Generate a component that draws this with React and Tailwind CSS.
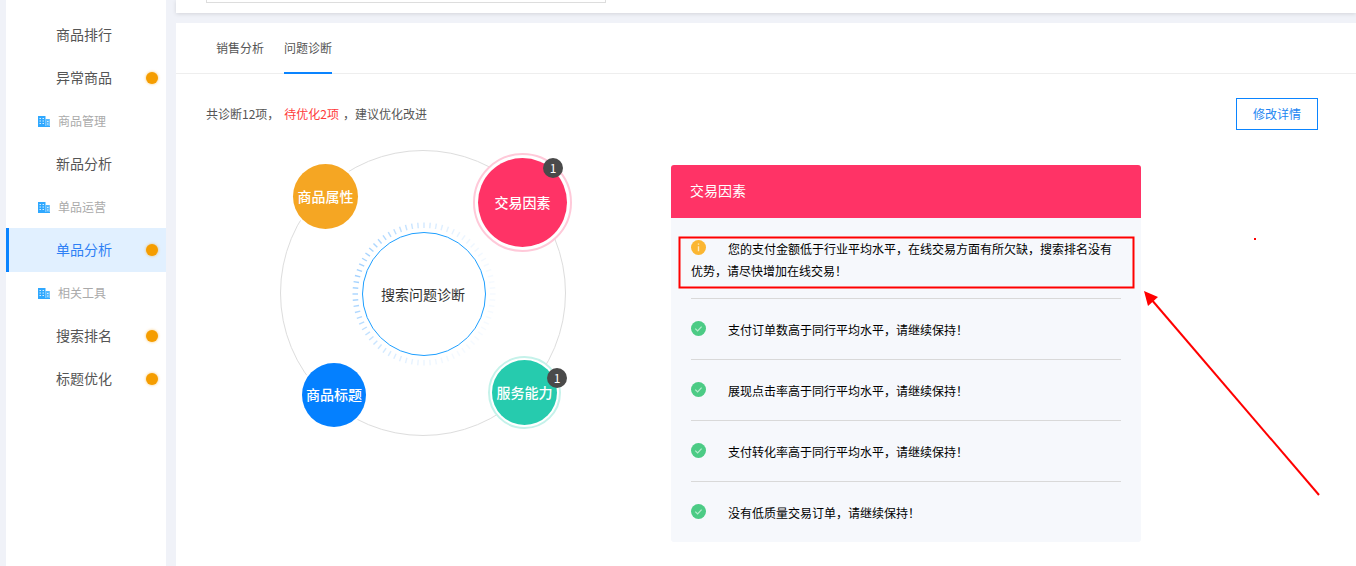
import React from 'react';

const menu = [
    { label: '商品排行' },
    { label: '异常商品', dot: true },
    { label: '商品管理', group: true },
    { label: '新品分析' },
    { label: '单品运营', group: true },
    { label: '单品分析', dot: true, active: true },
    { label: '相关工具', group: true, tall: 'h-[42px]' },
    { label: '搜索排名', dot: true },
    { label: '标题优化', dot: true },
];

const results = [
    { warn: true, text: '您的支付金额低于行业平均水平，在线交易方面有所欠缺，搜索排名没有优势，请尽快增加在线交易！' },
    { text: '支付订单数高于同行平均水平，请继续保持！' },
    { text: '展现点击率高于同行平均水平，请继续保持！' },
    { text: '支付转化率高于同行平均水平，请继续保持！' },
    { text: '没有低质量交易订单，请继续保持！' },
];

const BuildingIcon = () => (
    <svg width="12" height="12" viewBox="0 0 12 12" className="shrink-0">
        <path d="M0 12 V1 H7.500 V12 Z" fill="#2fa8ff" />
        <path d="M7.500 4 H11.800 V12 H7.500 Z" fill="#55b9ff" />
        <path d="M1.500 3.500h1.500M4.500 3.500h1.500M1.500 6h1.500M4.500 6h1.500M1.500 8.500h1.500M4.500 8.500h1.500M9 6.500h1.500M9 9h1.500" stroke="#d6eeff" strokeWidth="1" />
        <path d="M0 11.500H12" stroke="#2fa8ff" strokeWidth="1" />
    </svg>
);

const StatusIcon = ({ warn }) => (
    <svg width="15" height="15" viewBox="0 0 15 15" className="inline-block align-top mt-[2px] mr-[22px]">
        <circle cx="7.500" cy="7.500" r="7.500" fill={warn ? '#fbb632' : '#4ccb85'} />
        {warn ? (
            <path d="M7.500 3.500v1.200M7.500 6.200v5" stroke="#ffe9bd" strokeWidth="1.400" fill="none" />
        ) : (
            <path d="M4.300 7.600l2.300 2.300 4-4.200" stroke="#b5edcd" strokeWidth="1.200" fill="none" />
        )}
    </svg>
);

const SideMenu = () => (
    <aside className="w-[160px] ml-[6px] mr-[10px] bg-white pt-[13px] shrink-0">
        {menu.map(x => x.group ? (
            <div key={x.label} className={`${x.tall || 'h-[43px]'} flex items-center pl-[32px] gap-[8px] text-xs text-[#aaaaaa]`}>
                <BuildingIcon />
                {x.label}
            </div>
        ) : (
            <div
                key={x.label}
                className={`relative flex items-center pb-[2px] text-sm ${x.active ? 'h-[44px] pl-[47px] bg-[#e1f0ff] text-[#2f80f5] border-l-[3px] border-[#0a84ff]' : 'h-[43px] pl-[50px] text-[#555555]'}`}
            >
                {x.label}
                {x.dot && <span className={`absolute top-[16px] w-3 h-3 rounded-full bg-[#f59d00] shadow-[0_0_3px_rgba(245,157,0,0.6)] ${x.active ? 'left-[137px]' : 'left-[140px]'}`} />}
            </div>
        ))}
    </aside>
);

const Ticks = () => {
    const ticks = [];
    for (let i = 0; i < 72; i++) {
        const a = (i * 5 * Math.PI) / 180;
        const strength = (1 + Math.cos(a - Math.PI * 1.1)) / 2;
        ticks.push(
            <line
                key={i}
                x1={151 + 66 * Math.cos(a)}
                y1={144 + 66 * Math.sin(a)}
                x2={151 + 71.500 * Math.cos(a)}
                y2={144 + 71.500 * Math.sin(a)}
                stroke="#8ec8ff"
                strokeWidth="1.400"
                opacity={0.08 + 0.72 * strength * strength}
            />
        );
    }
    return ticks;
};

const Badge = ({ className }) => (
    <span className={`absolute w-5 h-5 rounded-full bg-[#4a4a4a] text-white text-xs flex items-center justify-center ${className}`}>1</span>
);

const Diagram = () => (
    <div className="relative w-[300px] h-[290px] ml-[67px] shrink-0">
        <svg width="300" height="290" className="absolute left-0 top-0">
            <circle cx="150" cy="143" r="142.500" fill="none" stroke="#dddddd" />
            <Ticks />
            <circle cx="151" cy="144" r="61.500" fill="#fff" stroke="#1e9fff" strokeWidth="1" />
        </svg>
        <div className="absolute left-[89px] top-[83px] w-[122px] h-[122px] flex items-center justify-center text-sm text-[#333333]">搜索问题诊断</div>

        <div className="absolute left-[20px] top-[14px] w-[65px] h-[65px] pb-[2px] rounded-full bg-[#f5a623] ring-2 ring-white text-white text-sm font-medium flex items-center justify-center">商品属性</div>

        <div className="absolute left-[200px] top-[3px] w-[99px] h-[99px] rounded-full border-2 border-[#ffc9d9] bg-white flex items-center justify-center">
            <div className="w-[89px] h-[89px] pb-[2px] rounded-full bg-[#ff3366] text-white text-sm font-medium flex items-center justify-center">交易因素</div>
        </div>
        <Badge className="left-[270px] top-[8px]" />

        <div className="absolute left-[29px] top-[213px] w-[64px] h-[64px] pb-[2px] rounded-full bg-[#0480ff] ring-2 ring-white text-white text-sm font-medium flex items-center justify-center">商品标题</div>

        <div className="absolute left-[215px] top-[206px] w-[73px] h-[73px] rounded-full border-2 border-[#c5f2ea] bg-white flex items-center justify-center">
            <div className="w-[65px] h-[65px] pb-[2px] rounded-full bg-[#26cbae] text-white text-sm font-medium flex items-center justify-center whitespace-nowrap">服务能力</div>
        </div>
        <Badge className="left-[274px] top-[218px]" />
    </div>
);

const ResultPanel = () => (
    <div className="w-[470px] ml-[98px] mt-[15px] rounded-[3px] overflow-hidden shrink-0">
        <div className="h-[53px] pb-[3px] bg-[#ff3366] text-white text-sm flex items-center pl-[19px]">交易因素</div>
        <ul className="bg-[#f6f8fc] px-[20px] text-xs leading-[22px] text-black">
            {results.map(x => (
                <li key={x.text} className="pt-[20px] pb-[18px] first:pb-[16px] border-b border-[#d9d9d9] last:border-b-0 last:pb-[18px]">
                    <StatusIcon warn={x.warn} />
                    {x.text}
                </li>
            ))}
        </ul>
    </div>
);

export default function App() {
    return (
        <div
            className="relative w-[1356px] h-[566px] overflow-hidden flex bg-[#f0f2f8]"
            style={{ fontFamily: '"Noto Sans CJK SC", "Liberation Sans", sans-serif' }}
        >
            <SideMenu />

            <main className="flex-1 flex flex-col min-w-0">
                <div className="h-[13px] bg-white pl-[30px] shadow-[0_1px_4px_rgba(0,0,0,0.12)] shrink-0">
                    <div className="w-[400px] h-[3px] border border-t-0 border-[#dddddd]" />
                </div>

                <section className="mt-[10px] flex-1 bg-white">
                    <div className="h-[51px] flex pl-[40px] gap-[20px] border-b border-[#eeeeee] text-xs">
                        <div className="h-[50px] flex items-center text-[#555555]">销售分析</div>
                        <div className="h-[51px] flex items-center text-[#555555] border-b-2 border-[#0a84ff]">问题诊断</div>
                    </div>

                    <div className="flex items-center justify-between pl-[30px] pr-[38px] mt-[24px] text-xs text-[#555555]">
                        <p>
                            共诊断12项，
                            <span className="ml-[5px] mr-[4px] text-[#ff3b3b]">待优化2项</span>
                            ，建议优化改进
                        </p>
                        <button className="w-[82px] h-[32px] border border-[#0a84ff] text-[#1c86f2] text-xs">修改详情</button>
                    </div>

                    <div className="flex mt-[20px] pl-[30px]">
                        <Diagram />
                        <ResultPanel />
                    </div>
                </section>
            </main>

            <svg width="1356" height="566" className="absolute left-0 top-0 pointer-events-none">
                <rect x="679.500" y="237.500" width="454" height="50" fill="none" stroke="#ff0000" strokeWidth="2" />
                <line x1="1319" y1="495" x2="1151" y2="299" stroke="#ff0000" strokeWidth="2" />
                <path d="M1144 291 L1158 297 L1148 306 Z" fill="#ff0000" />
                <rect x="1254" y="238" width="2" height="2" fill="#ff0000" />
            </svg>
        </div>
    );
}
